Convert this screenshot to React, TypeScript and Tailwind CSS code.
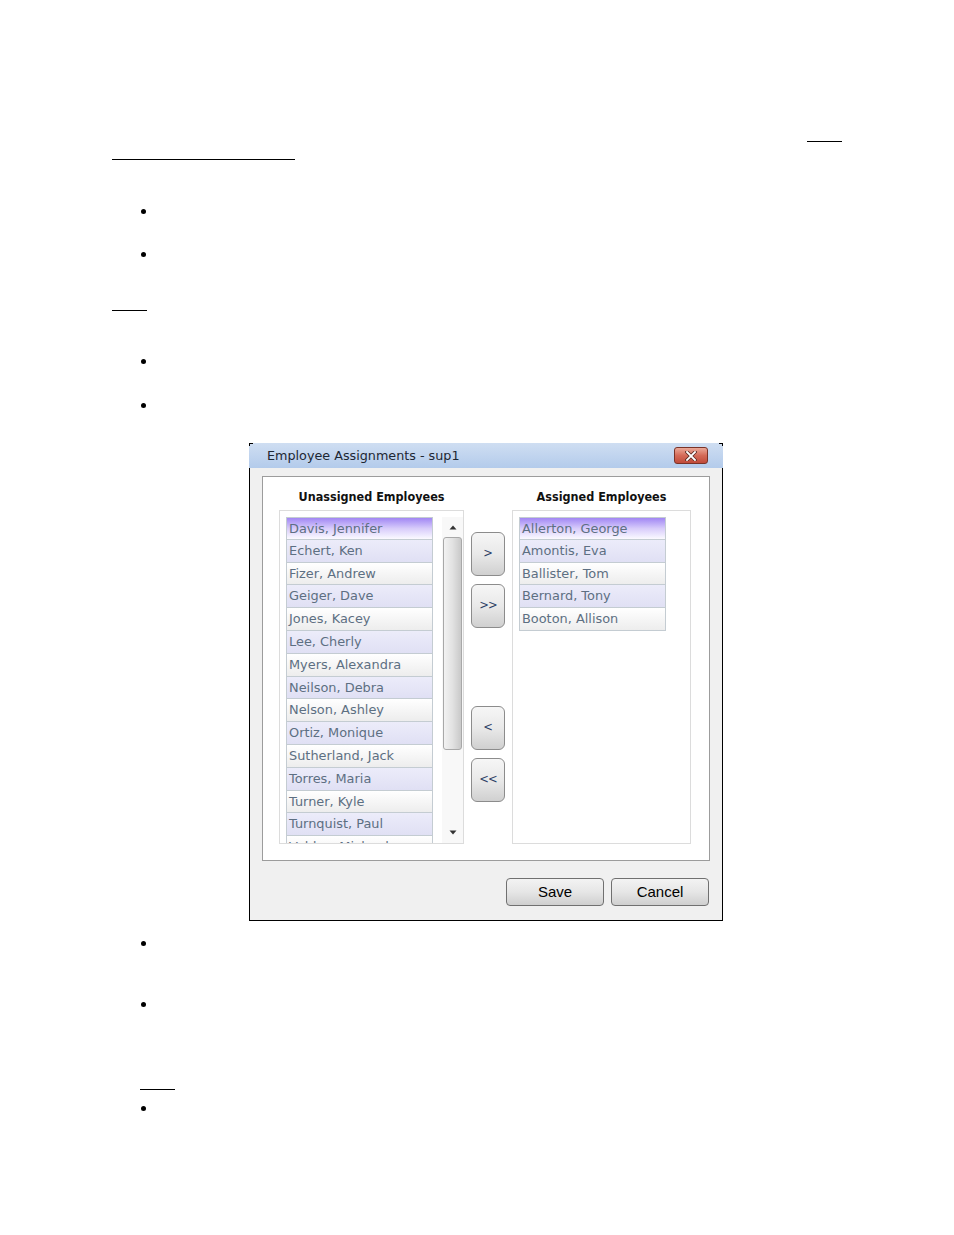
import React from "react";

const unassigned = [
  "Davis, Jennifer",
  "Echert, Ken",
  "Fizer, Andrew",
  "Geiger, Dave",
  "Jones, Kacey",
  "Lee, Cherly",
  "Myers, Alexandra",
  "Neilson, Debra",
  "Nelson, Ashley",
  "Ortiz, Monique",
  "Sutherland, Jack",
  "Torres, Maria",
  "Turner, Kyle",
  "Turnquist, Paul",
  "Valdez, Michael",
];

const assigned = [
  "Allerton, George",
  "Amontis, Eva",
  "Ballister, Tom",
  "Bernard, Tony",
  "Booton, Allison",
];

function Item({ name, index }: { name: string; index: number }) {
  const bg =
    index === 0
      ? "bg-linear-to-b from-[#a286f3] via-[#d8ccfa] to-[#fbfaff]"
      : index % 2 === 1
      ? "bg-linear-to-b from-[#ececfa] to-[#e0e0f4]"
      : "bg-linear-to-b from-[#ffffff] to-[#ededed]";
  return (
    <div
      className={`h-[22.8px] shrink-0 border-x border-b border-[#c4ccd2] ${
        index === 0 ? "border-t" : ""
      } ${bg} pl-[2px] text-[12.9px] leading-[21px] text-[#5d6f82] whitespace-nowrap overflow-hidden`}
      style={{ fontFamily: '"DejaVu Sans", Verdana, sans-serif' }}
    >
      {name}
    </div>
  );
}

function MoveButton({ label, className = "" }: { label: string; className?: string }) {
  return (
    <div
      className={`w-[34px] h-[44px] rounded-[6px] border border-[#8c8c8c] bg-linear-to-b from-[#f6f6f6] via-[#e9e9e9] to-[#d0d0d0] flex items-center justify-center text-[11.5px] text-[#2e3f66] ${className}`}
      style={{ fontFamily: '"DejaVu Sans", Verdana, sans-serif' }}
    >
      {label}
    </div>
  );
}

function Bullet({ mt }: { mt: string }) {
  return <div className={`${mt} ml-[141px] w-[5px] h-[5px] rounded-full bg-black`} />;
}

function DialogButton({ label }: { label: string }) {
  return (
    <div
      className="w-[98px] h-[28px] rounded-[4px] border border-[#707070] bg-linear-to-b from-[#f3f3f3] via-[#e6e6e6] to-[#cfcfcf] flex items-center justify-center text-[15px] text-black"
      style={{ fontFamily: '"Liberation Sans", Arial, sans-serif' }}
    >
      {label}
    </div>
  );
}

const headerFont = { fontFamily: '"DejaVu Sans Condensed", "DejaVu Sans", Verdana, sans-serif' };

export default function App() {
  return (
    <div className="w-[954px] h-[1235px] bg-white flex flex-col pt-[141px]">
      <div className="ml-[807px] w-[35px] h-px bg-black" />
      <div className="mt-[17px] ml-[112px] w-[183px] h-px bg-black" />
      <Bullet mt="mt-[49px]" />
      <Bullet mt="mt-[38px]" />
      <div className="mt-[53px] ml-[112px] w-[35px] h-px bg-black" />
      <Bullet mt="mt-[48px]" />
      <Bullet mt="mt-[39px]" />

      {/* Dialog */}
      <div className="mt-[35px] ml-[249px] w-[474px] relative flex flex-col">
        <span className="absolute left-0 top-0 w-[4px] h-[3px] border-l border-t border-black" />
        <span className="absolute right-0 top-0 w-[4px] h-[3px] border-r border-t border-black" />
        {/* title bar */}
        <div className="h-[25px] bg-linear-to-b from-[#cfdef2] to-[#b3cbeb] flex items-center justify-between pl-[18px] pr-[15px]">
          <span
            className="text-[12.75px] text-[#1d2733]"
            style={{ fontFamily: '"DejaVu Sans", Verdana, sans-serif' }}
          >
            Employee Assignments - sup1
          </span>
          <div className="w-[34px] h-[17px] rounded-[3px] border border-[#7a3328] bg-linear-to-b from-[#eaa898] via-[#d46a58] to-[#c04a3a] flex items-center justify-center">
            <svg width="12" height="10" viewBox="0 0 12 10">
              <path d="M2 1 L10 9 M10 1 L2 9" stroke="#5a2a22" strokeWidth="3.4" strokeLinecap="square" />
              <path d="M2 1 L10 9 M10 1 L2 9" stroke="#ffffff" strokeWidth="1.8" strokeLinecap="square" />
            </svg>
          </div>
        </div>
        {/* body */}
        <div className="border-x border-b border-black bg-[#f0f0f0] px-[12px] pt-[8px] pb-[14px] flex flex-col">
          <div className="h-[385px] border border-[#9c9c9c] bg-white flex pl-[16px]">
            {/* left column */}
            <div className="w-[185px] flex flex-col">
              <div
                className="h-[33px] pt-[13px] text-center text-[12.5px] leading-[14px] font-bold text-[#111]"
                style={headerFont}
              >
                Unassigned Employees
              </div>
              <div className="h-[334px] border border-[#dcdcdc] pt-[6px] pl-[6px] flex overflow-hidden">
                <div className="w-[147px] flex flex-col overflow-hidden">
                  {unassigned.map((n, i) => (
                    <Item key={n} name={n} index={i} />
                  ))}
                </div>
                <div className="ml-[9px] w-[21px] flex flex-col items-center bg-[#f8f8f8]">
                  <div className="h-[20px] flex items-center justify-center">
                    <svg width="8" height="5" viewBox="0 0 8 5">
                      <path d="M0.5 4.5 L4 0.5 L7.5 4.5 Z" fill="#333" />
                    </svg>
                  </div>
                  <div className="w-[19px] h-[213px] rounded-[3px] border border-[#a8a8a8] bg-linear-to-r from-[#f2f2f2] via-[#e2e2e2] to-[#c9c9c9]" />
                  <div className="flex-1" />
                  <div className="h-[20px] flex items-center justify-center mb-[1px]">
                    <svg width="8" height="5" viewBox="0 0 8 5">
                      <path d="M0.5 0.5 L4 4.5 L7.5 0.5 Z" fill="#333" />
                    </svg>
                  </div>
                </div>
              </div>
            </div>
            {/* buttons */}
            <div className="ml-[7px] w-[34px] flex flex-col pt-[55px]">
              <MoveButton label=">" />
              <MoveButton label=">>" className="mt-[8px] tracking-[-1px]" />
              <MoveButton label="<" className="mt-[78px]" />
              <MoveButton label="<<" className="mt-[8px] tracking-[-1px]" />
            </div>
            {/* right column */}
            <div className="ml-[7px] w-[179px] flex flex-col">
              <div
                className="h-[33px] pt-[13px] text-center text-[12.5px] leading-[14px] font-bold text-[#111]"
                style={headerFont}
              >
                Assigned Employees
              </div>
              <div className="h-[334px] border border-[#dcdcdc] pt-[6px] pl-[6px] flex flex-col overflow-hidden">
                <div className="w-[147px] flex flex-col">
                  {assigned.map((n, i) => (
                    <Item key={n} name={n} index={i} />
                  ))}
                </div>
              </div>
            </div>
          </div>
          <div className="mt-[17px] flex justify-end gap-[7px] pr-[1px]">
            <DialogButton label="Save" />
            <DialogButton label="Cancel" />
          </div>
        </div>
      </div>

      <Bullet mt="mt-[20px]" />
      <Bullet mt="mt-[56px]" />
      <div className="mt-[82px] ml-[140px] w-[35px] h-px bg-black" />
      <Bullet mt="mt-[16px]" />
    </div>
  );
}
